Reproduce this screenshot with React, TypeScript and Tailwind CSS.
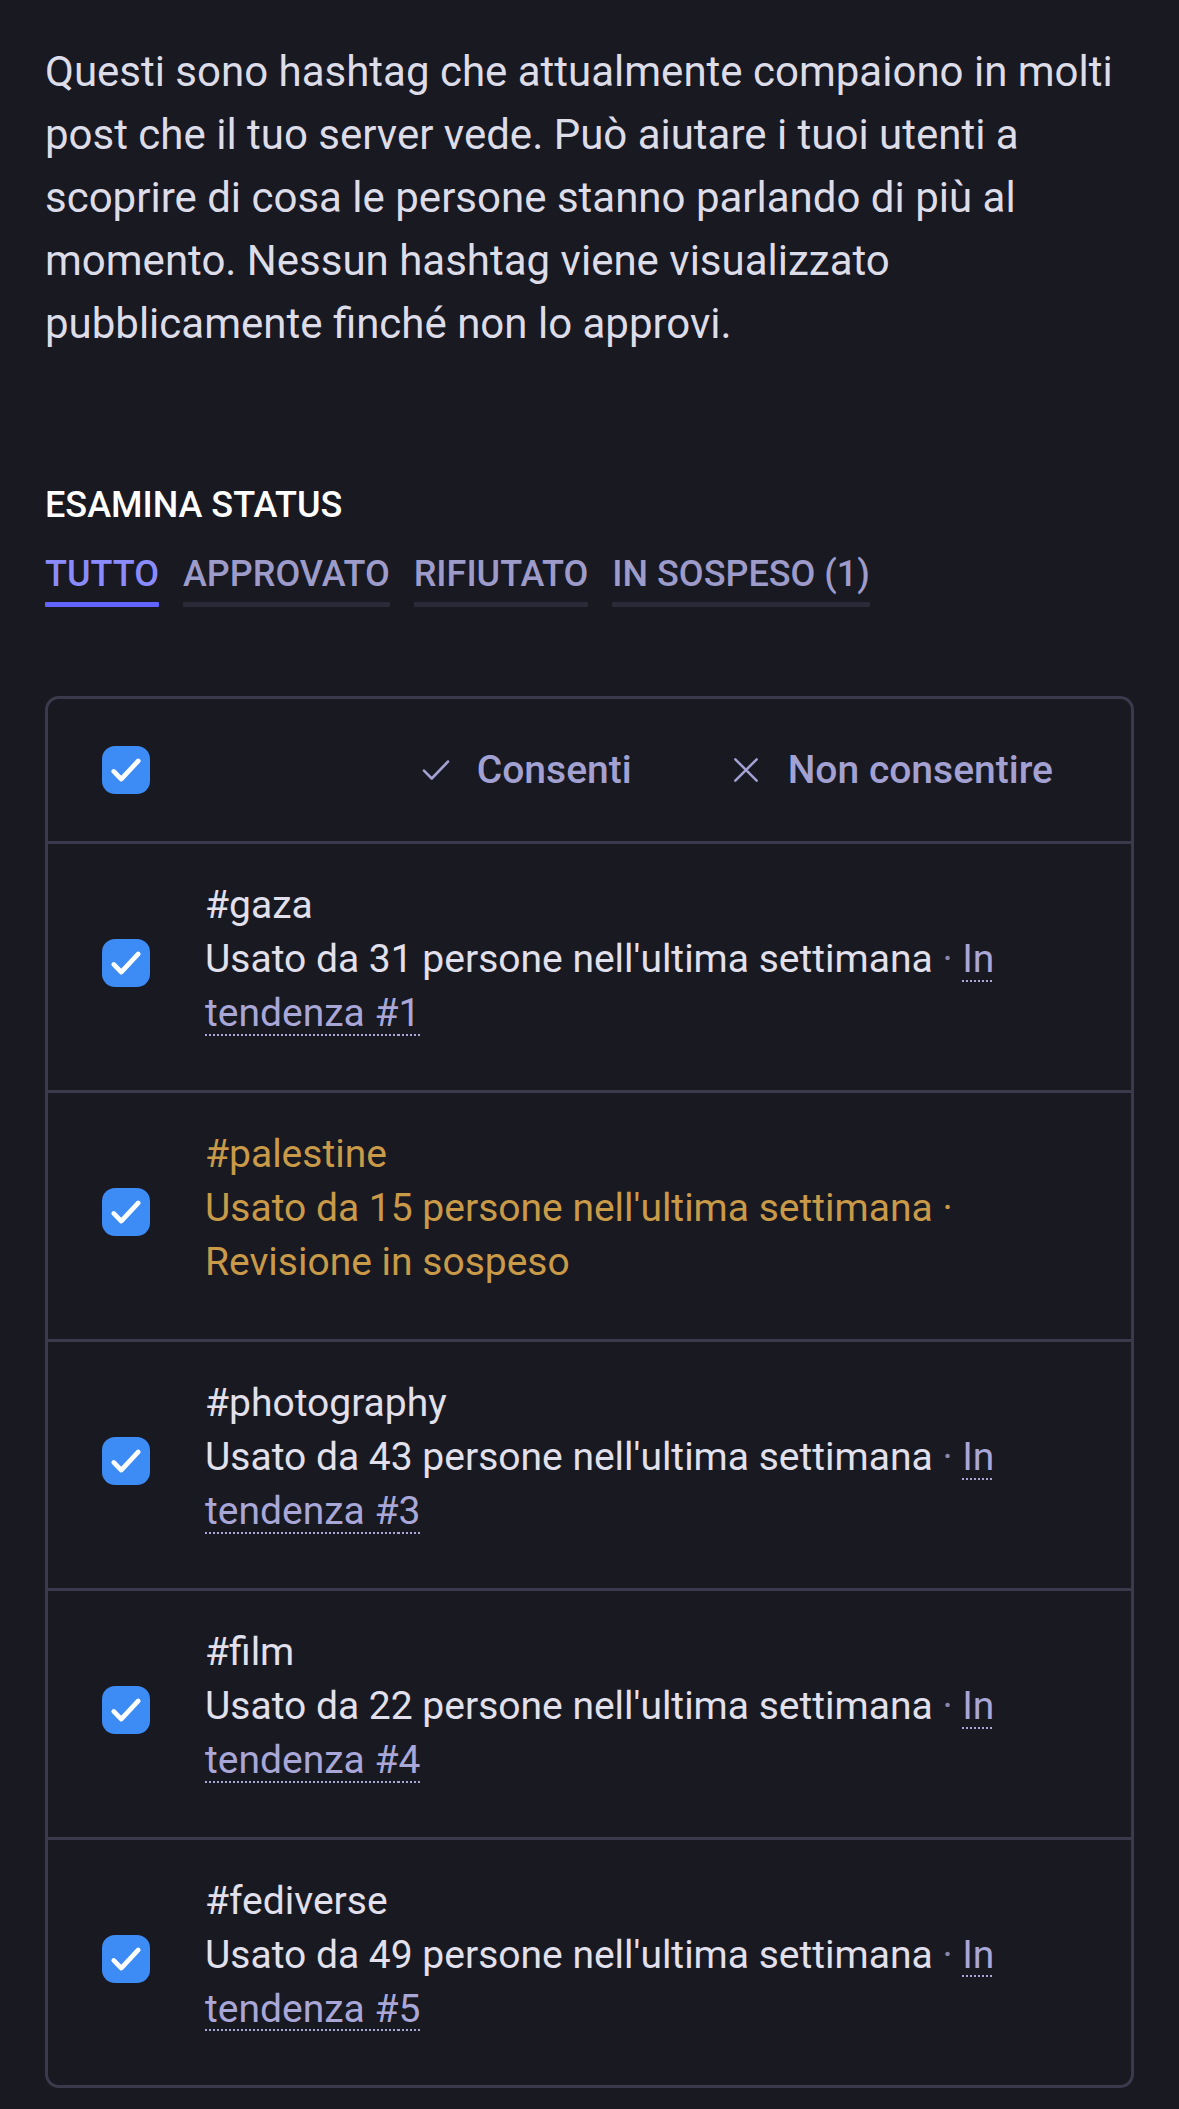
import React from "react";

type Row = {
  tag: string;
  count: number;
  rank?: number;
  pending?: boolean;
};

const rows: Row[] = [
  { tag: "gaza", count: 31, rank: 1 },
  { tag: "palestine", count: 15, pending: true },
  { tag: "photography", count: 43, rank: 3 },
  { tag: "film", count: 22, rank: 4 },
  { tag: "fediverse", count: 49, rank: 5 },
];

function CheckBox() {
  return (
    <div className="flex h-[48px] w-[48px] shrink-0 items-center justify-center rounded-[13px] bg-[#3d8bf5]">
      <svg width="42" height="42" viewBox="0 0 24 24" fill="none">
        <path
          d="M5 12.8l4.3 4.4L19 6.8"
          stroke="#ffffff"
          strokeWidth="2.7"
          strokeLinecap="round"
          strokeLinejoin="round"
        />
      </svg>
    </div>
  );
}

export default function App() {
  return (
    <div
      className="min-h-[2109px] bg-[#191922] px-[45px] pt-[40px] pb-[22px]"
      style={{ fontFamily: "Roboto, 'Noto Sans', sans-serif" }}
    >
      <p className="text-[42px] leading-[63px] text-[#dddce9]">
        Questi sono hashtag che attualmente compaiono in molti post che il tuo server vede. Può aiutare i tuoi utenti a scoprire di cosa le persone stanno parlando di più al momento. Nessun hashtag viene visualizzato pubblicamente finché non lo approvi.
      </p>

      <h3 className="mt-[130px] text-[36px] font-medium leading-[40px] text-white">
        ESAMINA STATUS
      </h3>

      <div className="mt-[28px] flex gap-[24px]">
        {[
          { label: "TUTTO", active: true },
          { label: "APPROVATO" },
          { label: "RIFIUTATO" },
          { label: "IN SOSPESO (1)" },
        ].map((t) => (
          <div key={t.label} className="flex flex-col">
            <span
              className={
                t.active
                  ? "text-[36px] font-medium leading-[42px] text-[#8a8bff]"
                  : "text-[36px] font-medium leading-[42px] text-[#9d9bc9]"
              }
            >
              {t.label}
            </span>
            <span
              className={
                t.active
                  ? "mt-[7px] h-[5px] rounded-[1px] bg-[#6364ff]"
                  : "mt-[7px] h-[5px] rounded-[1px] bg-[#2a2a38]"
              }
            />
          </div>
        ))}
      </div>

      <div className="mt-[89px] overflow-hidden rounded-[14px] border-[3px] border-[#3a3a4c]">
        <div className="flex h-[145px] items-center border-b-[3px] border-[#3a3a4c] pl-[54px] pr-[78px]">
          <CheckBox />
          <div className="ml-auto flex items-center gap-[98px] text-[39px] font-medium text-[#a3a1d2]">
            <span className="flex items-center gap-[24px]">
              <svg width="34" height="34" viewBox="0 0 24 24" fill="none">
                <path d="M3.5 12.5l5.5 5.5L20.5 6" stroke="#a3a1d2" strokeWidth="1.8" strokeLinecap="round" strokeLinejoin="round" />
              </svg>
              Consenti
            </span>
            <span className="flex items-center gap-[26px]">
              <svg width="32" height="32" viewBox="0 0 24 24" fill="none">
                <path d="M4 4l16 16M20 4L4 20" stroke="#a3a1d2" strokeWidth="1.9" strokeLinecap="round" />
              </svg>
              Non consentire
            </span>
          </div>
        </div>

        {rows.map((r, i) => (
          <div
            key={r.tag}
            className={
              i < rows.length - 1
                ? "flex h-[249px] items-center border-b-[3px] border-[#3a3a4c] pb-[8px] pl-[54px] pr-[60px]"
                : "flex h-[245px] items-center pb-[8px] pl-[54px] pr-[60px]"
            }
          >
            <CheckBox />
            <div
              className={
                r.pending
                  ? "mb-[8px] ml-[55px] text-[39px] leading-[54px] text-[#c99a47]"
                  : "mb-[8px] ml-[55px] text-[39px] leading-[54px] text-[#e1e0ec]"
              }
            >
              <div>#{r.tag}</div>
              <div>
                Usato da {r.count} persone nell'ultima settimana{" "}
                <span className={r.pending ? "" : "text-[#8886ad]"}>·</span>{" "}
                {r.pending ? (
                  <span>Revisione in sospeso</span>
                ) : (
                  <span className="text-[#a9a7d8] underline decoration-dotted decoration-[2px] underline-offset-[8px]">
                    In tendenza #{r.rank}
                  </span>
                )}
              </div>
            </div>
          </div>
        ))}
      </div>
    </div>
  );
}
